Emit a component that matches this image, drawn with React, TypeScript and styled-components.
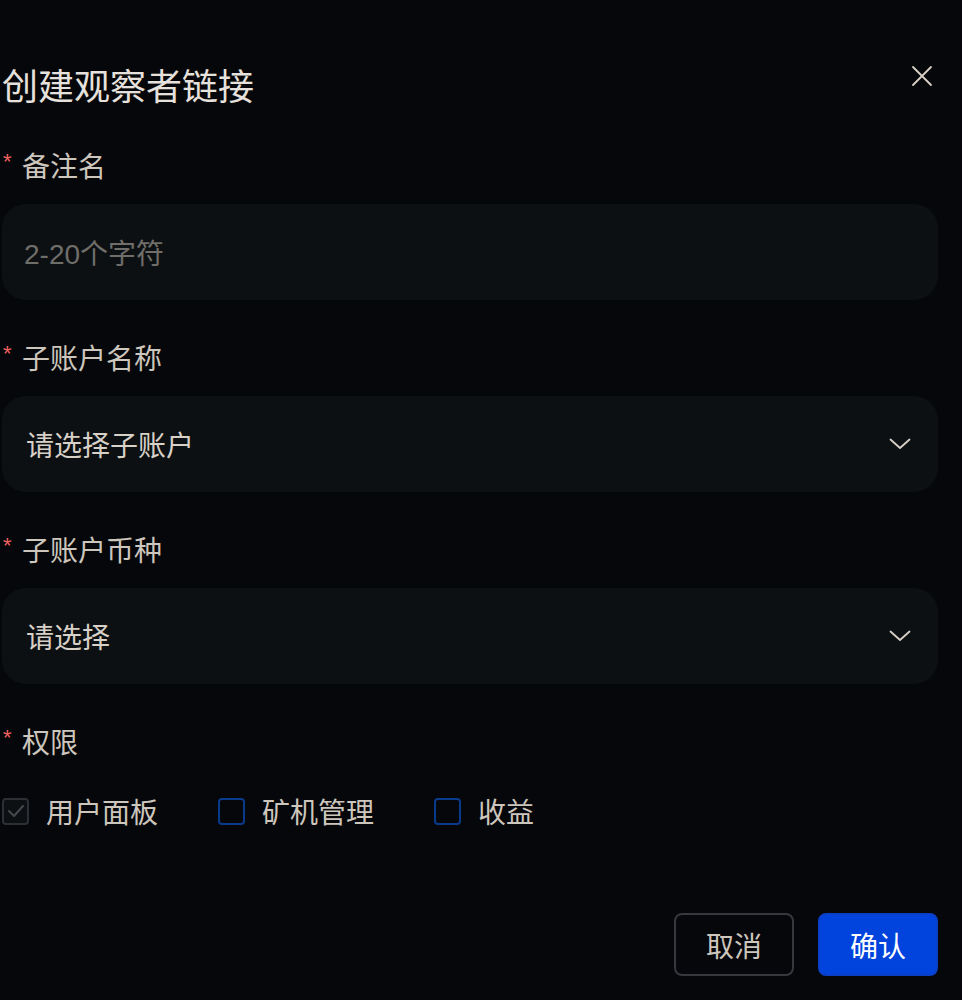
import { FC } from "react";
import styled, { createGlobalStyle } from "styled-components";

const FONT = `"Liberation Sans", "Noto Sans CJK SC", sans-serif`;

const GlobalStyle = createGlobalStyle`
	html, body {
		margin: 0;
		padding: 0;
		background: #06070a;
	}
	body {
		font-family: ${FONT};
	}
`;

const CloseIcon: FC = () => (
	<svg width="22" height="22" viewBox="0 0 22 22" fill="none">
		<path
			d="M2 2L20 20M20 2L2 20"
			stroke="#d8d1c8"
			strokeWidth="1.8"
			strokeLinecap="round"
		/>
	</svg>
);

const ChevronDown: FC = () => (
	<svg width="22" height="12" viewBox="0 0 22 12" fill="none">
		<path
			d="M1.5 1.5L11 10L20.5 1.5"
			stroke="#d8d1c8"
			strokeWidth="1.8"
			strokeLinecap="round"
			strokeLinejoin="round"
		/>
	</svg>
);

interface FieldProps {
	label: string;
	children: React.ReactNode;
}

const Field: FC<FieldProps> = ({ label, children }) => (
	<FieldWrapper>
		<Label>
			<Required>*</Required>
			{label}
		</Label>
		{children}
	</FieldWrapper>
);

interface CheckProps {
	label: string;
	checked?: boolean;
	disabled?: boolean;
}

const Check: FC<CheckProps> = ({ label, checked, disabled }) => (
	<CheckItem>
		<CheckBox $disabled={disabled}>
			{checked && (
				<svg width="18" height="14" viewBox="0 0 18 14" fill="none">
					<path
						d="M2 7L7 12L16 2"
						stroke="#45494d"
						strokeWidth="2"
						strokeLinecap="round"
						strokeLinejoin="round"
					/>
				</svg>
			)}
		</CheckBox>
		<CheckLabel>{label}</CheckLabel>
	</CheckItem>
);

export default function App() {
	return (
		<>
			<GlobalStyle />
			<Modal>
				<Header>
					<Title>创建观察者链接</Title>
					<CloseButton>
						<CloseIcon />
					</CloseButton>
				</Header>

				<Field label="备注名">
					<InputBox>
						<Placeholder>2-20个字符</Placeholder>
					</InputBox>
				</Field>

				<Field label="子账户名称">
					<InputBox>
						<Value>请选择子账户</Value>
						<ChevronDown />
					</InputBox>
				</Field>

				<Field label="子账户币种">
					<InputBox>
						<Value>请选择</Value>
						<ChevronDown />
					</InputBox>
				</Field>

				<Field label="权限">
					<CheckRow>
						<Check label="用户面板" checked disabled />
						<Check label="矿机管理" />
						<Check label="收益" />
					</CheckRow>
				</Field>

				<Footer>
					<CancelButton>取消</CancelButton>
					<ConfirmButton>确认</ConfirmButton>
				</Footer>
			</Modal>
		</>
	);
}

const Modal = styled.div`
	width: 936px;
	padding: 68px 0 0 2px;
	display: flex;
	flex-direction: column;
`;

const Header = styled.div`
	display: flex;
	justify-content: space-between;
	align-items: center;
	height: 40px;
	margin-bottom: 37px;
`;

const Title = styled.h2`
	margin: 0;
	font-size: 36px;
	font-weight: 400;
	line-height: 40px;
	color: #e6e1dc;
`;

const CloseButton = styled.div`
	display: flex;
	align-items: center;
	justify-content: center;
	width: 22px;
	height: 22px;
	margin-right: 5px;
	margin-top: -24px;
`;

const FieldWrapper = styled.div`
	display: flex;
	flex-direction: column;
	margin-bottom: 37px;
`;

const Label = styled.div`
	display: flex;
	align-items: center;
	height: 40px;
	margin-bottom: 19px;
	font-size: 28px;
	color: #cdc6bd;
`;

const Required = styled.span`
	color: #f0605d;
	font-size: 22px;
	width: 19px;
	margin-top: -6px;
	margin-left: 1px;
`;

const InputBox = styled.div`
	height: 96px;
	border-radius: 24px;
	background: #0d1012;
	display: flex;
	align-items: center;
	justify-content: space-between;
	padding: 0 27px 0 22px;
	box-sizing: border-box;
`;

const Placeholder = styled.span`
	font-size: 28px;
	color: #6f6e6a;
`;

const Value = styled.span`
	font-size: 28px;
	color: #d8d1c8;
	margin-left: 2px;
`;

const CheckRow = styled.div`
	display: flex;
	align-items: center;
	gap: 60px;
	margin-top: 11px;
`;

const CheckItem = styled.div`
	display: flex;
	align-items: center;
	gap: 17px;
`;

const CheckBox = styled.div<{ $disabled?: boolean }>`
	width: 27px;
	height: 27px;
	box-sizing: border-box;
	border-radius: 4px;
	border: 2px solid ${({ $disabled }) => ($disabled ? "#2c2f33" : "#0a3a8c")};
	background: ${({ $disabled }) => ($disabled ? "#0d1012" : "transparent")};
	display: flex;
	align-items: center;
	justify-content: center;
`;

const CheckLabel = styled.span`
	font-size: 28px;
	color: #cdc6bd;
`;

const Footer = styled.div`
	display: flex;
	justify-content: flex-end;
	gap: 24px;
	margin-top: 45px;
`;

const ButtonBase = styled.button`
	width: 120px;
	height: 63px;
	border-radius: 8px;
	font-family: ${FONT};
	font-size: 28px;
	cursor: pointer;
	box-sizing: border-box;
	padding: 0;
`;

const CancelButton = styled(ButtonBase)`
	background: transparent;
	border: 2px solid #35383c;
	color: #cdc6bd;
`;

const ConfirmButton = styled(ButtonBase)`
	background: #0043dd;
	border: 2px solid #0a3fc8;
	color: #ffffff;
`;
